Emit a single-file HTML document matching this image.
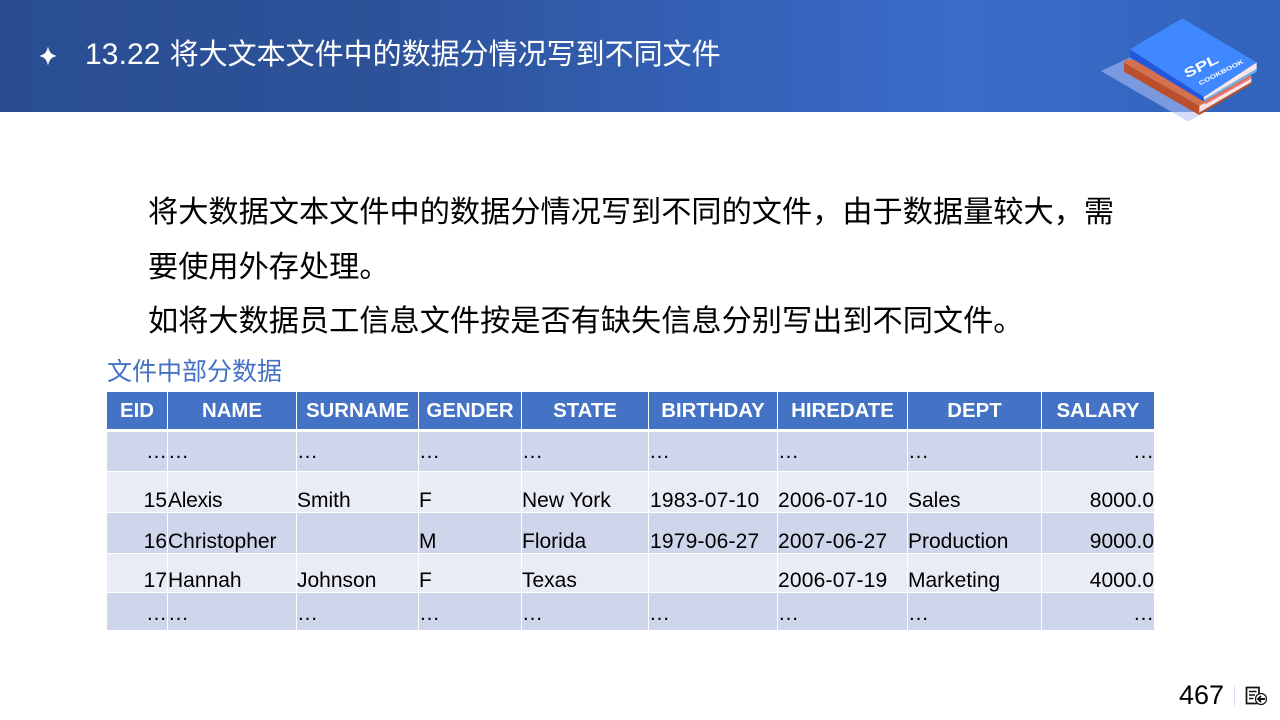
<!DOCTYPE html>
<html lang="zh"><head><meta charset="utf-8"><title>13.22</title>
<style>
html,body{margin:0;padding:0;background:#fff}
body{width:1280px;height:720px;position:relative;overflow:hidden;font-family:"Liberation Sans","Noto Sans CJK SC",sans-serif;color:#000}
.hd{position:absolute;left:0;top:0;width:1280px;height:112px;background:linear-gradient(90deg,#2a4d92 0%,#2d5299 30%,#3a6ccb 75%,#3163bb 100%)}
.t{position:absolute;white-space:nowrap}
.title{left:85px;top:34px;font-size:29px;line-height:42px;color:#fff;font-weight:400}
.title span{font-size:30px;letter-spacing:.1px;margin-right:1px}
.p{left:148px;font-size:30.2px;line-height:44px}
.cell{position:absolute;background:#cfd5ea}
.c{position:absolute;white-space:nowrap;font-size:21px;line-height:24px}
.d{letter-spacing:.2px}
.h{position:absolute;background:#4472c4;color:#fff;font-weight:bold;font-size:20.4px;line-height:39px;text-align:center;height:37px;top:392px;white-space:nowrap;overflow:hidden}
</style></head><body>
<div class="hd"></div>
<svg style="position:absolute;left:38px;top:46px" width="20" height="20" viewBox="0 0 20 20"><path d="M10 2C11.2 6.5 13 8.6 17.5 10C13 11.4 11.2 13.5 10 18C8.8 13.5 7 11.4 2.5 10C7 8.6 8.8 6.5 10 2Z" fill="#fff" stroke="#fff" stroke-width=".8"/></svg>
<div class="t title"><span>13.22</span> 将大文本文件中的数据分情况写到不同文件</div>

<svg style="position:absolute;left:1090px;top:0" width="190" height="130" viewBox="0 0 570 390">
<polygon points="33,213 120,172 330,345 295,365" fill="#b2c1f6" fill-opacity=".56"/>
<polygon points="102,188 102,215 328,345 328,318" fill="#bb4f2c"/>
<polygon points="328,337 484,246 488,250 328,345" fill="#bb4f2c"/>
<polygon points="102,188 110,178 482,226 484,230 328,318" fill="#d5704e"/>
<polygon points="328,318 484,230 484,246 328,337" fill="#fde4e4"/>
<polygon points="345,308 484,230 484,236 345,314" fill="#ee7484"/>
<polygon points="120,148 120,172 342,305 342,290" fill="#2458dc"/>
<polygon points="342,295 500,203 500,215 342,304" fill="#6fb4ee"/>
<polygon points="340,290 500,187 500,206 342,298" fill="#fbe6e2"/>
<polygon points="277,55 500,187 342,291 120,148" fill="#3f88ff"/>
<text transform="translate(290,235) rotate(-26)" font-size="40" font-weight="bold" fill="#fff" textLength="110" lengthAdjust="spacingAndGlyphs" font-family="Liberation Sans">SPL</text>
<text transform="translate(330,256) rotate(-27)" font-size="18" font-weight="bold" fill="#fff" textLength="148" lengthAdjust="spacingAndGlyphs" font-family="Liberation Sans">COOKBOOK</text>
</svg>

<div class="t p" style="top:191px">将大数据文本文件中的数据分情况写到不同的文件，由于数据量较大，需</div>
<div class="t p" style="top:246px">要使用外存处理。</div>
<div class="t p" style="top:300px">如将大数据员工信息文件按是否有缺失信息分别写出到不同文件。</div>
<div class="t" style="left:107px;top:354px;font-size:25px;line-height:36px;color:#4472c4">文件中部分数据</div>

<div class="h" style="left:107px;width:60px">EID</div>
<div class="h" style="left:168px;width:128px">NAME</div>
<div class="h" style="left:297px;width:121px">SURNAME</div>
<div class="h" style="left:419px;width:102px">GENDER</div>
<div class="h" style="left:522px;width:126px">STATE</div>
<div class="h" style="left:649px;width:128px">BIRTHDAY</div>
<div class="h" style="left:778px;width:129px">HIREDATE</div>
<div class="h" style="left:908px;width:133px">DEPT</div>
<div class="h" style="left:1042px;width:112px">SALARY</div>

<div class="cell" style="left:107px;top:432px;width:1047px;height:39px"></div>
<div class="cell" style="left:107px;top:472px;width:1047px;height:40px;background:#e9ebf5"></div>
<div class="cell" style="left:107px;top:513px;width:1047px;height:40px"></div>
<div class="cell" style="left:107px;top:554px;width:1047px;height:38px;background:#e9ebf5"></div>
<div class="cell" style="left:107px;top:593px;width:1047px;height:37px"></div>
<div style="position:absolute;top:432px;left:167px;width:1px;height:198px;background:#fff"></div>
<div style="position:absolute;top:432px;left:296px;width:1px;height:198px;background:#fff"></div>
<div style="position:absolute;top:432px;left:418px;width:1px;height:198px;background:#fff"></div>
<div style="position:absolute;top:432px;left:521px;width:1px;height:198px;background:#fff"></div>
<div style="position:absolute;top:432px;left:648px;width:1px;height:198px;background:#fff"></div>
<div style="position:absolute;top:432px;left:777px;width:1px;height:198px;background:#fff"></div>
<div style="position:absolute;top:432px;left:907px;width:1px;height:198px;background:#fff"></div>
<div style="position:absolute;top:432px;left:1041px;width:1px;height:198px;background:#fff"></div>

<div class="c" style="right:1113px;top:440px">…</div><div class="c" style="left:168px;top:440px">…</div><div class="c" style="left:297px;top:440px">…</div><div class="c" style="left:419px;top:440px">…</div><div class="c" style="left:522px;top:440px">…</div><div class="c" style="left:649px;top:440px">…</div><div class="c" style="left:778px;top:440px">…</div><div class="c" style="left:908px;top:440px">…</div><div class="c" style="right:126px;top:440px">…</div>

<div class="c" style="right:1113px;top:489px">15</div><div class="c" style="left:168px;top:489px;letter-spacing:-.3px">Alexis</div><div class="c" style="left:297px;top:489px">Smith</div><div class="c" style="left:419px;top:489px">F</div><div class="c" style="left:522px;top:489px">New York</div><div class="c d" style="left:650px;top:489px">1983-07-10</div><div class="c d" style="left:778px;top:489px">2006-07-10</div><div class="c" style="left:908px;top:489px">Sales</div><div class="c" style="right:126px;top:489px">8000.0</div>

<div class="c" style="right:1113px;top:530px">16</div><div class="c" style="left:168px;top:530px">Christopher</div><div class="c" style="left:419px;top:530px">M</div><div class="c" style="left:522px;top:530px">Florida</div><div class="c d" style="left:650px;top:530px">1979-06-27</div><div class="c d" style="left:778px;top:530px">2007-06-27</div><div class="c" style="left:908px;top:530px">Production</div><div class="c" style="right:126px;top:530px">9000.0</div>

<div class="c" style="right:1113px;top:569px">17</div><div class="c" style="left:168px;top:569px">Hannah</div><div class="c" style="left:297px;top:569px">Johnson</div><div class="c" style="left:419px;top:569px">F</div><div class="c" style="left:522px;top:569px">Texas</div><div class="c d" style="left:778px;top:569px">2006-07-19</div><div class="c" style="left:908px;top:569px">Marketing</div><div class="c" style="right:126px;top:569px">4000.0</div>

<div class="c" style="right:1113px;top:602px">…</div><div class="c" style="left:168px;top:602px">…</div><div class="c" style="left:297px;top:602px">…</div><div class="c" style="left:419px;top:602px">…</div><div class="c" style="left:522px;top:602px">…</div><div class="c" style="left:649px;top:602px">…</div><div class="c" style="left:778px;top:602px">…</div><div class="c" style="left:908px;top:602px">…</div><div class="c" style="right:126px;top:602px">…</div>

<div class="t" style="left:1179px;top:679px;font-size:27px;line-height:32px">467</div>
<div style="position:absolute;left:1234px;top:686px;width:1px;height:20px;background:#d5e0f2"></div>
<svg style="position:absolute;left:1245px;top:685px" width="24" height="22" viewBox="0 0 24 22" fill="none" stroke="#111">
<path d="M12 18.5H1.5V2.5H14V9" stroke-width="1.7"/>
<path d="M4 6.5H11.5M4 10H10M4 13.5H8.5" stroke-width="1.6"/>
<circle cx="16" cy="14" r="5.5" fill="#fff" stroke-width="1.2"/>
<path d="M20 14H13.5M16 11L13 14L16 17" stroke-width="1.9"/>
</svg>
</body></html>
